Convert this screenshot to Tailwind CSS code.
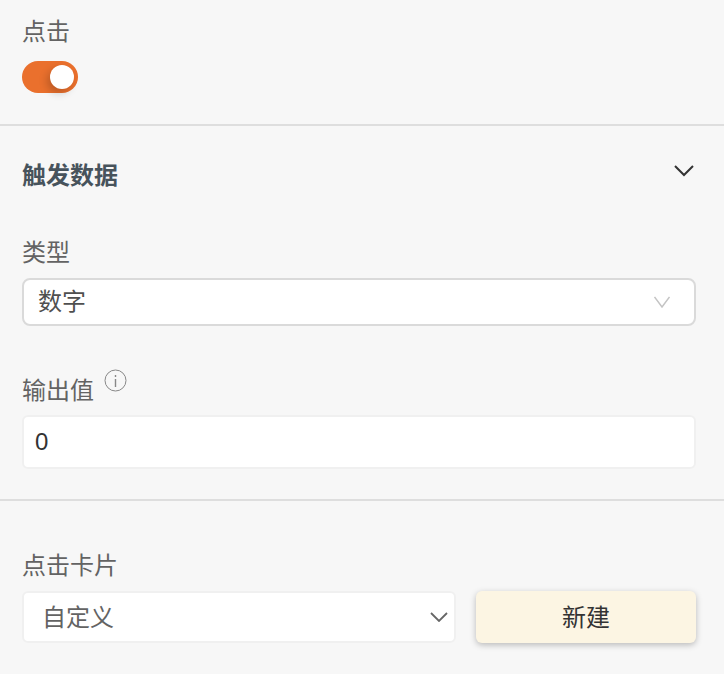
<!DOCTYPE html>
<html lang="zh-CN">
<head>
    <meta charset="UTF-8">
    <meta name="viewport" content="width=device-width, initial-scale=1.0">
    <title>点击</title>
    <script src="https://cdn.jsdelivr.net/npm/@tailwindcss/browser@4"></script>
</head>
<body class="bg-[#f7f7f7] font-['Roboto','Noto_Sans_CJK_SC',sans-serif] text-[24px] text-[#636363] overflow-hidden">
    <div class="w-[724px] h-[674px]">
        <!-- toggle -->
        <section class="h-[126px] px-[22px] pt-[14px] border-b-2 border-[#dedede]">
            <div class="h-[36px] leading-[36px]">点击</div>
            <div class="mt-[11px] w-[56px] h-[32px] rounded-full bg-[#ea702d] flex items-center justify-end pr-[4px]">
                <div class="w-[24px] h-[24px] rounded-full bg-white shadow-[-3px_4px_8px_rgba(0,0,0,0.2)]"></div>
            </div>
        </section>

        <!-- trigger data -->
        <section class="h-[375px] pl-[22px] pr-[28px] border-b-2 border-[#dedede]">
            <div class="pt-[31px] flex justify-between h-[67px]">
                <span class="font-bold text-[#47535c] leading-[36px] translate-y-[0.5px]">触发数据</span>
                <svg class="w-[20px] h-[12px] mt-[8px] mr-[2px]" viewBox="0 0 20 12" fill="none" stroke="#333" stroke-width="2"><path d="M1 1l9 9 9-9"/></svg>
            </div>
            <div class="mt-[42px] h-[36px] leading-[36px]">类型</div>
            <div class="mt-[7px] h-[48px] rounded-[8px] border-2 border-[#dadada] bg-white flex items-center justify-between pl-[14px] pr-[24px] text-[#4f4f4f]">
                <span>数字</span>
                <svg class="w-[16px] h-[12px]" viewBox="0 0 16 12" fill="none" stroke="#c4c4c4" stroke-width="1.5"><path d="M0.5 1l7.5 10 7.5-10"/></svg>
            </div>
            <div class="mt-[38px] flex items-start h-[50px]">
                <span class="mt-[9px] leading-[36px]">输出值</span>
                <svg class="ml-[10px] mt-[5px] w-[24px] h-[24px]" viewBox="0 0 24 24" fill="none" stroke="#888"><circle cx="11.5" cy="11.5" r="10.5"/><path d="M11.5 10v8M11.5 6v2" stroke-width="1.4"/></svg>
            </div>
            <div class="mt-[1px] h-[54px] rounded-[6px] border-2 border-[#f0f0f0] bg-white flex items-center pl-[11px] text-[#333] font-['Liberation_Sans',sans-serif]">0</div>
        </section>

        <!-- click card -->
        <section class="px-[22px] pt-[47px]">
            <div class="h-[36px] leading-[36px]">点击卡片</div>
            <div class="mt-[7px] flex gap-[20px]">
                <div class="w-[434px] h-[52px] rounded-[6px] border-2 border-[#f0f0f0] bg-white flex items-center justify-between pl-[18px] pr-[6px]">
                    <span class="mt-[2px]">自定义</span>
                    <svg class="w-[18px] h-[10px]" viewBox="0 0 18 10" fill="none" stroke="#666" stroke-width="1.8"><path d="M1 1l8 8 8-8"/></svg>
                </div>
                <button class="w-[220px] h-[52px] pt-[2px] rounded-[6px] bg-[#fcf5e3] text-[#333] shadow-[0_2px_6px_rgba(0,0,0,0.25)]">新建</button>
            </div>
        </section>
    </div>
</body>
</html>
